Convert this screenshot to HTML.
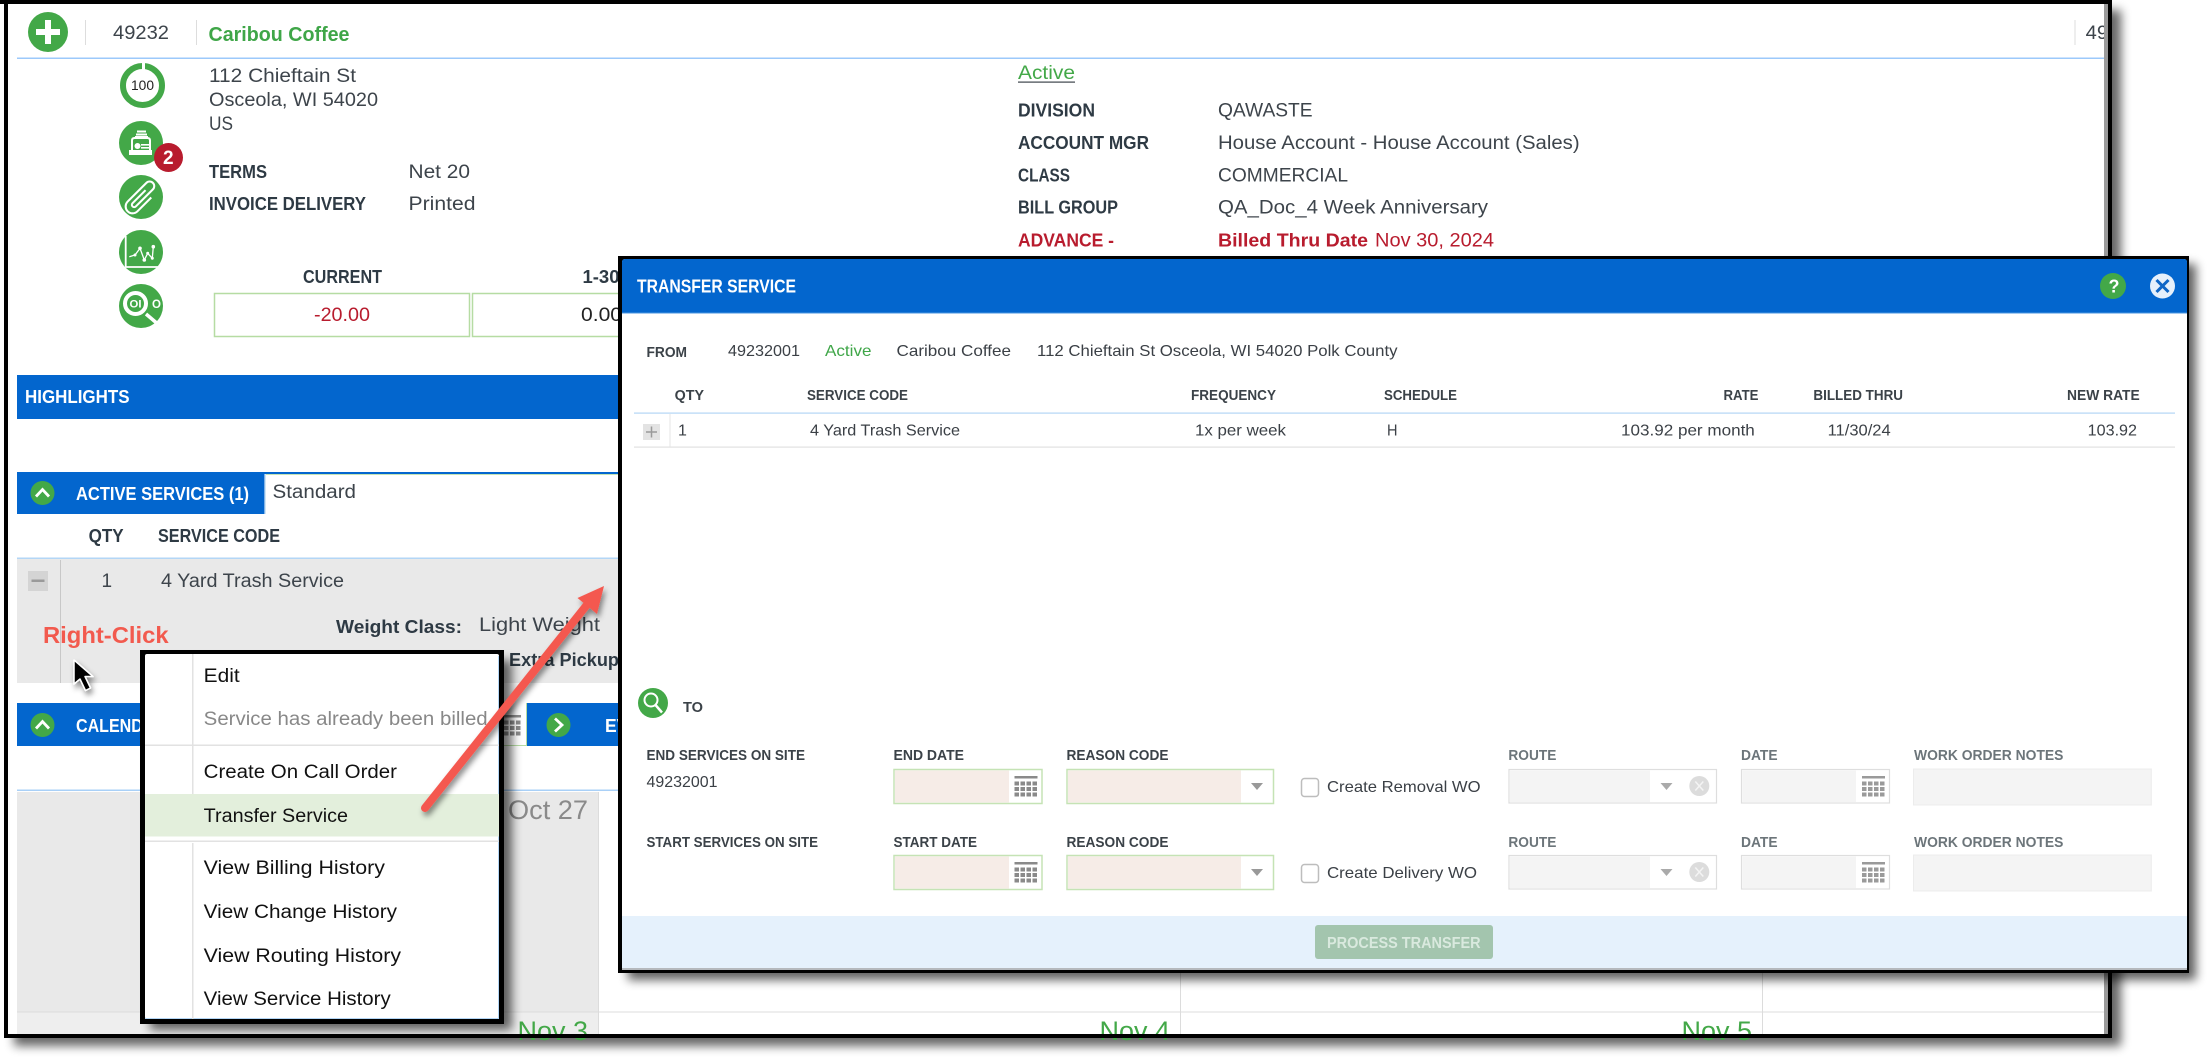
<!DOCTYPE html>
<html lang="en">
<head>
<meta charset="utf-8">
<title>Transfer Service</title>
<style>
html,body{margin:0;padding:0;background:#fff;width:2212px;height:1058px;overflow:hidden}
svg{display:block}
text{font-family:"Liberation Sans",Arial,sans-serif;white-space:pre}
.b{font-weight:700}
.m{font-size:19px;fill:#3d444b}
.l{font-size:18.5px;fill:#2e3a44;font-weight:700}
.d{font-size:16px;fill:#3b4046}
.h{font-size:14.5px;fill:#3b4248;font-weight:700}
.g{font-size:14.5px;fill:#6c757a;font-weight:700}
.w{font-size:18px;fill:#fff;font-weight:700}
.u{font-size:19px;fill:#111}
.t{font-size:27px}
</style>
</head>
<body>
<svg xmlns="http://www.w3.org/2000/svg" width="2212" height="1058" viewBox="0 0 2212 1058">
<defs>
<filter id="blur" filterUnits="userSpaceOnUse" x="0" y="0" width="2212" height="1058"><feGaussianBlur stdDeviation="5"/></filter>
<filter id="sh" filterUnits="userSpaceOnUse" x="0" y="0" width="2212" height="1058"><feDropShadow dx="2" dy="4" stdDeviation="3" flood-color="#000" flood-opacity=".45"/></filter>
<clipPath id="pg"><rect x="8" y="4" width="2096" height="1030"/></clipPath>
<g id="cal">
<rect x="0" y="0" width="23" height="2.5"/>
<rect x="0" y="5.5" width="4.5" height="4"/><rect x="6" y="5.5" width="4.5" height="4"/><rect x="12" y="5.5" width="4.5" height="4"/><rect x="18" y="5.5" width="4.5" height="4"/>
<rect x="0" y="11" width="4.5" height="4"/><rect x="6" y="11" width="4.5" height="4"/><rect x="12" y="11" width="4.5" height="4"/><rect x="18" y="11" width="4.5" height="4"/>
<rect x="0" y="16.5" width="4.5" height="4"/><rect x="6" y="16.5" width="4.5" height="4"/><rect x="12" y="16.5" width="4.5" height="4"/><rect x="18" y="16.5" width="4.5" height="4"/>
</g>
</defs>

<!-- page shadow -->
<rect x="14" y="10" width="2107" height="1036" fill="#000" opacity=".6" filter="url(#blur)"/>
<rect x="0" y="0" width="2112" height="1038" fill="#fff"/>

<!-- top bar -->
<circle cx="48" cy="32" r="20" fill="#43a848"/>
<rect x="36" y="29" width="24" height="6" fill="#fff"/><rect x="45" y="20" width="6" height="24" fill="#fff"/>
<rect x="85" y="20" width="1" height="25" fill="#ddd"/>
<text x="113" y="39" class="m" textLength="56" lengthAdjust="spacingAndGlyphs">49232</text>
<rect x="196" y="20" width="1" height="25" fill="#ddd"/>
<text x="208.500" y="41" class="b" font-size="20" fill="#3fa648" textLength="141" lengthAdjust="spacingAndGlyphs">Caribou Coffee</text>
<rect x="2074.500" y="20" width="1" height="25" fill="#ddd"/>
<text x="2085.700" y="39" class="m" textLength="56" lengthAdjust="spacingAndGlyphs" clip-path="url(#pg)">49232</text>
<rect x="17" y="57.500" width="2087" height="1.500" fill="#9cc9fb"/>

<!-- side icons -->
<circle cx="142.500" cy="85.500" r="19.500" fill="#fff" stroke="#43a848" stroke-width="6"/>
<rect x="142" y="62" width="3" height="8" fill="#fff"/>
<text x="131" y="90" font-size="13.500" fill="#222" textLength="23" lengthAdjust="spacingAndGlyphs">100</text>

<circle cx="141" cy="143" r="22" fill="#43a848"/>
<rect x="129" y="150" width="23" height="5" fill="#fff"/>
<path d="M132 150v-9.500q0-2.500 2.500-2.500h13q2.500 0 2.500 2.500v9.500" fill="none" stroke="#fff" stroke-width="2"/>
<circle cx="137.500" cy="146" r="3" fill="#fff"/>
<rect x="141" y="144" width="8" height="1.600" fill="#fff"/><rect x="141" y="147" width="8" height="1.600" fill="#fff"/>
<rect x="137" y="130.500" width="9" height="2" fill="#fff"/><rect x="136" y="133.500" width="11" height="2" fill="#fff"/><rect x="135" y="136" width="13" height="1.500" fill="#fff"/>

<circle cx="168.500" cy="157.500" r="14.500" fill="#b81c2e"/>
<text x="163" y="164" class="b" font-size="19" fill="#fff">2</text>

<circle cx="141" cy="197" r="22" fill="#43a848"/>
<g transform="translate(141.500 197.500) rotate(45) scale(1.150)">
<path d="M6 -6V11a6 6 0 0 1-12 0V-12a4 4 0 0 1 8 0V9a2 2 0 0 1-4 0V-7" fill="none" stroke="#fff" stroke-width="1.800"/>
</g>

<circle cx="141" cy="252" r="22" fill="#43a848"/>
<path d="M125.700 236V267H158" fill="none" stroke="#fff" stroke-width="1.800"/>
<path d="M129.300 256.700L135 255L140 248.300L144.300 260L147.700 253.300L152.300 258.300L153.300 246.700" fill="none" stroke="#fff" stroke-width="1.300"/>
<g fill="#fff"><circle cx="135" cy="255" r="1.500"/><circle cx="140" cy="248.300" r="1.800"/><circle cx="144.300" cy="260" r="1.800"/><circle cx="147.700" cy="253.300" r="1.500"/><circle cx="152.300" cy="258.300" r="1.500"/><circle cx="153.300" cy="246.700" r="1.800"/></g>

<circle cx="141" cy="306" r="22" fill="#43a848"/>
<circle cx="135.500" cy="303.500" r="10.500" fill="#43a848" stroke="#fff" stroke-width="4"/>
<text x="129.500" y="307.500" class="b" font-size="11" fill="#fff" textLength="12" lengthAdjust="spacingAndGlyphs">OI</text>
<text x="152" y="308" class="b" font-size="11.500" fill="#fff">O</text>
<path d="M146 314L159 325" stroke="#fff" stroke-width="3.500"/>

<!-- address -->
<text x="209" y="82" class="m" textLength="147" lengthAdjust="spacingAndGlyphs">112 Chieftain St</text>
<text x="209" y="106" class="m" textLength="169" lengthAdjust="spacingAndGlyphs">Osceola, WI 54020</text>
<text x="209" y="130" class="m" font-size="19" textLength="24" lengthAdjust="spacingAndGlyphs">US</text>
<text x="209" y="178" class="l" textLength="58" lengthAdjust="spacingAndGlyphs">TERMS</text>
<text x="408.500" y="178" class="m" textLength="61.500" lengthAdjust="spacingAndGlyphs">Net 20</text>
<text x="209" y="210" class="l" textLength="157" lengthAdjust="spacingAndGlyphs">INVOICE DELIVERY</text>
<text x="408.500" y="210" class="m" textLength="67" lengthAdjust="spacingAndGlyphs">Printed</text>

<text x="303" y="283" class="l" font-size="18" textLength="79" lengthAdjust="spacingAndGlyphs">CURRENT</text>
<text x="582.500" y="283" class="l" textLength="37" lengthAdjust="spacingAndGlyphs">1-30</text>
<rect x="214.500" y="293.500" width="255" height="43" fill="#fff" stroke="#b6dca3" stroke-width="1.500"/>
<rect x="472.500" y="293.500" width="255" height="43" fill="#fff" stroke="#b6dca3" stroke-width="1.500"/>
<text x="314" y="321" font-size="19" fill="#b81c2e" textLength="56" lengthAdjust="spacingAndGlyphs">-20.00</text>
<text x="581" y="321" font-size="19" fill="#222" textLength="41" lengthAdjust="spacingAndGlyphs">0.00</text>

<!-- account info -->
<text x="1018" y="79" font-size="19" fill="#43a848" textLength="57" lengthAdjust="spacingAndGlyphs">Active</text>
<rect x="1018" y="81.500" width="57" height="1.200" fill="#3d444b"/>
<text x="1018" y="116.700" class="l" textLength="77" lengthAdjust="spacingAndGlyphs">DIVISION</text>
<text x="1218" y="116.700" class="m" textLength="94.600" lengthAdjust="spacingAndGlyphs">QAWASTE</text>
<text x="1018" y="149" class="l" textLength="131" lengthAdjust="spacingAndGlyphs">ACCOUNT MGR</text>
<text x="1218" y="149" class="m" textLength="361.600" lengthAdjust="spacingAndGlyphs">House Account - House Account (Sales)</text>
<text x="1018" y="181.700" class="l" textLength="52" lengthAdjust="spacingAndGlyphs">CLASS</text>
<text x="1218" y="181.700" class="m" textLength="130" lengthAdjust="spacingAndGlyphs">COMMERCIAL</text>
<text x="1018" y="213.700" class="l" textLength="100" lengthAdjust="spacingAndGlyphs">BILL GROUP</text>
<text x="1218" y="213.700" class="m" textLength="270" lengthAdjust="spacingAndGlyphs">QA_Doc_4 Week Anniversary</text>
<text x="1018" y="246.700" class="b" font-size="18.500" fill="#b81c2e" textLength="96" lengthAdjust="spacingAndGlyphs">ADVANCE -</text>
<text x="1218" y="246.700" class="b" font-size="18.500" fill="#b81c2e" textLength="150" lengthAdjust="spacingAndGlyphs">Billed Thru Date</text>
<text x="1375" y="246.700" font-size="19" fill="#b81c2e" textLength="119" lengthAdjust="spacingAndGlyphs">Nov 30, 2024</text>

<!-- highlights -->
<rect x="17" y="375" width="601" height="44" fill="#0366ce"/>
<text x="25" y="403" class="w" textLength="104.500" lengthAdjust="spacingAndGlyphs">HIGHLIGHTS</text>

<!-- active services -->
<rect x="17" y="472" width="601" height="2" fill="#0366ce"/>
<rect x="265" y="474" width="353" height="1" fill="#c5e3b5"/>
<rect x="17" y="472" width="247.500" height="42" fill="#0366ce"/>
<rect x="265" y="474" width="1" height="40" fill="#cfe6f5"/>
<circle cx="42.500" cy="493" r="12" fill="#43a848"/>
<path d="M36 496.500L42.500 489.500L49 496.500" fill="none" stroke="#fff" stroke-width="2.800"/>
<text x="76" y="500" class="w" textLength="173" lengthAdjust="spacingAndGlyphs">ACTIVE SERVICES (1)</text>
<text x="272.500" y="498" class="m" textLength="83.500" lengthAdjust="spacingAndGlyphs">Standard</text>
<text x="88.600" y="542" class="l" font-size="18" textLength="35" lengthAdjust="spacingAndGlyphs">QTY</text>
<text x="158" y="542" class="l" font-size="18" textLength="122" lengthAdjust="spacingAndGlyphs">SERVICE CODE</text>
<rect x="17" y="558" width="601" height="125" fill="#e9e9e9"/>
<rect x="17" y="557.500" width="601" height="1.500" fill="#b3d6f6"/>
<rect x="60" y="560" width="1" height="123" fill="#c8c8c8"/>
<rect x="28" y="571" width="20" height="20" fill="#d4d4d4"/>
<rect x="31.500" y="579.500" width="13" height="2.500" fill="#9a9a9a"/>
<text x="101.500" y="587" class="m">1</text>
<text x="161" y="587" class="m" textLength="183" lengthAdjust="spacingAndGlyphs">4 Yard Trash Service</text>
<text x="336" y="633" class="l" textLength="126" lengthAdjust="spacingAndGlyphs">Weight Class:</text>
<text x="479" y="631" class="m" textLength="121" lengthAdjust="spacingAndGlyphs">Light Weight</text>
<text x="509" y="666" class="l" textLength="110" lengthAdjust="spacingAndGlyphs">Extra Pickup</text>
<text x="43" y="643" class="b" font-size="23.500" fill="#f25a4e" textLength="125.600" lengthAdjust="spacingAndGlyphs">Right-Click</text>

<!-- calendar bar -->
<rect x="17" y="703" width="601" height="43" fill="#0366ce"/>
<rect x="300" y="703" width="227" height="43" fill="#fff"/>
<rect x="300" y="745" width="227" height="1" fill="#b6dca3"/>
<rect x="526" y="703" width="1" height="43" fill="#b6dca3"/>
<circle cx="42.500" cy="725" r="12" fill="#43a848"/>
<path d="M36 728.500L42.500 721.500L49 728.500" fill="none" stroke="#fff" stroke-width="2.800"/>
<text x="76" y="732" class="w" textLength="90" lengthAdjust="spacingAndGlyphs">CALENDAR</text>
<use href="#cal" x="498" y="715" fill="#8c8c8c"/>
<circle cx="558.500" cy="725" r="12" fill="#43a848"/>
<path d="M555 718.500L562 725L555 731.500" fill="none" stroke="#fff" stroke-width="2.800"/>
<text x="605" y="732" class="w" textLength="70" lengthAdjust="spacingAndGlyphs">EVENTS</text>

<!-- calendar grid -->
<rect x="17" y="789.500" width="2087" height="1.500" fill="#a9d0f7"/>
<rect x="17" y="792" width="581" height="220" fill="#e9e9e9"/>
<rect x="17" y="1012.500" width="581" height="21.500" fill="#eeeeee"/>
<rect x="17" y="1011.500" width="2087" height="1" fill="#dcdcdc"/>
<rect x="598" y="792" width="1" height="242" fill="#dcdcdc"/>
<rect x="1180" y="792" width="1" height="242" fill="#dcdcdc"/>
<rect x="1762" y="792" width="1" height="242" fill="#dcdcdc"/>
<text x="508" y="819" class="t" fill="#8a8a8a" font-size="28" textLength="80" lengthAdjust="spacingAndGlyphs">Oct 27</text>
<text x="517.500" y="1040" class="t" fill="#43a848" textLength="70.500" lengthAdjust="spacingAndGlyphs">Nov 3</text>
<text x="1099.500" y="1040" class="t" fill="#43a848" textLength="70.500" lengthAdjust="spacingAndGlyphs">Nov 4</text>
<text x="1681.500" y="1040" class="t" fill="#43a848" textLength="70.500" lengthAdjust="spacingAndGlyphs">Nov 5</text>

<!-- page frame -->
<rect x="2104" y="4" width="4.500" height="1030" fill="#9a9a9a"/>
<rect x="2108" y="0" width="4" height="1038" fill="#000"/>
<rect x="0" y="0" width="2112" height="4" fill="#000"/>
<rect x="4" y="0" width="4" height="1038" fill="#000"/>
<rect x="4" y="1034" width="2108" height="4" fill="#000"/>

<!-- context menu -->
<rect x="150" y="660" width="362" height="370" fill="#000" opacity=".6" filter="url(#blur)"/>
<rect x="140" y="650" width="364" height="374" fill="#000"/>
<rect x="145" y="654" width="354" height="365" rx="2" fill="#fff"/>
<rect x="498" y="656" width="1" height="362" fill="#b3d6f6"/>
<rect x="145" y="1018" width="354" height="1" fill="#b3d6f6"/>
<rect x="192" y="654" width="1.500" height="140" fill="#e2e2e2"/>
<rect x="192" y="843" width="1.500" height="176" fill="#e2e2e2"/>
<rect x="145" y="744.500" width="354" height="1.500" fill="#e2e2e2"/>
<rect x="145" y="794" width="354" height="42.500" fill="#e3efdc"/>
<rect x="145" y="840.500" width="354" height="1.500" fill="#e2e2e2"/>
<text x="203.700" y="682" class="u" textLength="36" lengthAdjust="spacingAndGlyphs">Edit</text>
<text x="203.700" y="725" font-size="19" fill="#888" textLength="284" lengthAdjust="spacingAndGlyphs">Service has already been billed</text>
<text x="203.700" y="778" class="u" textLength="193.300" lengthAdjust="spacingAndGlyphs">Create On Call Order</text>
<text x="203.700" y="822" class="u" textLength="144.300" lengthAdjust="spacingAndGlyphs">Transfer Service</text>
<text x="203.700" y="874" class="u" textLength="181.300" lengthAdjust="spacingAndGlyphs">View Billing History</text>
<text x="203.700" y="918" class="u" textLength="193.300" lengthAdjust="spacingAndGlyphs">View Change History</text>
<text x="203.700" y="962" class="u" textLength="197.300" lengthAdjust="spacingAndGlyphs">View Routing History</text>
<text x="203.700" y="1005" class="u" textLength="187" lengthAdjust="spacingAndGlyphs">View Service History</text>

<!-- dialog -->
<rect x="628" y="264" width="1568" height="716" fill="#000" opacity=".62" filter="url(#blur)"/>
<rect x="618" y="256" width="1571" height="717" fill="#000"/>
<rect x="622" y="259" width="1565" height="711" rx="3" fill="#fff"/>
<path d="M622 313V262q0-3 3-3H2184q3 0 3 3V313Z" fill="#0366ce"/>
<rect x="622" y="312.500" width="1565" height="1" fill="#4a95e0"/>
<text x="637" y="292.700" class="w" font-size="17.500" textLength="159" lengthAdjust="spacingAndGlyphs">TRANSFER SERVICE</text>
<circle cx="2113" cy="286" r="13" fill="#43a848"/>
<text x="2108.500" y="292.500" class="b" font-size="18" fill="#fff">?</text>
<circle cx="2162.500" cy="286" r="12.500" fill="#e6f0fb"/>
<path d="M2156.500 280L2168.500 292M2168.500 280L2156.500 292" stroke="#0f66c6" stroke-width="3"/>

<text x="646.500" y="357" class="h" textLength="40.500" lengthAdjust="spacingAndGlyphs">FROM</text>
<text x="728" y="356" class="d" textLength="72" lengthAdjust="spacingAndGlyphs">49232001</text>
<text x="825" y="356" font-size="16" fill="#3fa648" textLength="46.500" lengthAdjust="spacingAndGlyphs">Active</text>
<text x="896.500" y="356" class="d" textLength="114.500" lengthAdjust="spacingAndGlyphs">Caribou Coffee</text>
<text x="1037" y="356" class="d" textLength="360.500" lengthAdjust="spacingAndGlyphs">112 Chieftain St Osceola, WI 54020 Polk County</text>

<text x="674.600" y="400" class="h" textLength="29.400" lengthAdjust="spacingAndGlyphs">QTY</text>
<text x="807" y="400" class="h" textLength="101" lengthAdjust="spacingAndGlyphs">SERVICE CODE</text>
<text x="1191" y="400" class="h" textLength="85" lengthAdjust="spacingAndGlyphs">FREQUENCY</text>
<text x="1384" y="400" class="h" textLength="73" lengthAdjust="spacingAndGlyphs">SCHEDULE</text>
<text x="1723.500" y="400" class="h" textLength="35" lengthAdjust="spacingAndGlyphs">RATE</text>
<text x="1813.400" y="400" class="h" textLength="89.600" lengthAdjust="spacingAndGlyphs">BILLED THRU</text>
<text x="2067" y="400" class="h" textLength="72.700" lengthAdjust="spacingAndGlyphs">NEW RATE</text>
<rect x="634" y="412.500" width="1541" height="1.200" fill="#b3d6f6"/>
<rect x="634" y="446.500" width="1541" height="1.200" fill="#e0e0e0"/>
<rect x="669.500" y="414" width="1" height="33" fill="#e4e4e4"/>
<rect x="643" y="424" width="17" height="16" fill="#e3e3e3"/>
<path d="M646 432H657M651.500 426.500V437.500" stroke="#9a9a9a" stroke-width="1.500"/>
<text x="678" y="435.500" class="d">1</text>
<text x="810" y="435.500" class="d" textLength="150" lengthAdjust="spacingAndGlyphs">4 Yard Trash Service</text>
<text x="1195" y="435.500" class="d" textLength="91" lengthAdjust="spacingAndGlyphs">1x per week</text>
<text x="1387" y="435.500" class="d" textLength="10.500" lengthAdjust="spacingAndGlyphs">H</text>
<text x="1621" y="435.500" class="d" textLength="133.800" lengthAdjust="spacingAndGlyphs">103.92 per month</text>
<text x="1827.600" y="435.500" class="d" textLength="63.100" lengthAdjust="spacingAndGlyphs">11/30/24</text>
<text x="2087.700" y="435.500" class="d" textLength="49.300" lengthAdjust="spacingAndGlyphs">103.92</text>

<circle cx="653" cy="703" r="15" fill="#43a848"/>
<circle cx="651" cy="700" r="6.500" fill="none" stroke="#fff" stroke-width="2"/>
<path d="M655.500 705L662 712.500" stroke="#fff" stroke-width="2.500"/>
<text x="683" y="712" class="h" textLength="20" lengthAdjust="spacingAndGlyphs">TO</text>

<!-- row 1 -->
<text x="646.500" y="760" class="h" textLength="158.500" lengthAdjust="spacingAndGlyphs">END SERVICES ON SITE</text>
<text x="646.500" y="787" class="d" textLength="71" lengthAdjust="spacingAndGlyphs">49232001</text>
<text x="893.500" y="760" class="h" textLength="70.500" lengthAdjust="spacingAndGlyphs">END DATE</text>
<text x="1066.500" y="760" class="h" textLength="102" lengthAdjust="spacingAndGlyphs">REASON CODE</text>
<rect x="894" y="769.500" width="148" height="34" fill="#fff" stroke="#c5e3b5" stroke-width="1.500"/>
<rect x="895" y="770.500" width="114" height="32" fill="#f6ece7"/>
<use href="#cal" x="1014.500" y="776" fill="#8a8a8a"/>
<rect x="1067" y="769.500" width="206.500" height="34" fill="#fff" stroke="#c5e3b5" stroke-width="1.500"/>
<rect x="1068" y="770.500" width="173" height="32" fill="#f6ece7"/>
<path d="M1251 783H1263L1257 790Z" fill="#999"/>
<rect x="1301.500" y="778.500" width="17" height="18" rx="3" fill="#fff" stroke="#bdbdbd" stroke-width="1.500"/>
<text x="1327" y="792" class="d" textLength="153.600" lengthAdjust="spacingAndGlyphs">Create Removal WO</text>
<text x="1508.400" y="760" class="g" textLength="48" lengthAdjust="spacingAndGlyphs">ROUTE</text>
<text x="1741" y="760" class="g" textLength="36.600" lengthAdjust="spacingAndGlyphs">DATE</text>
<text x="1914" y="760" class="g" textLength="149.400" lengthAdjust="spacingAndGlyphs">WORK ORDER NOTES</text>
<rect x="1509" y="769.500" width="207.500" height="33.500" fill="#fff" stroke="#dedede" stroke-width="1.200"/>
<rect x="1510" y="770.500" width="140" height="31.500" fill="#f4f4f4"/>
<path d="M1660.500 783H1672.500L1666.500 790Z" fill="#aaa"/>
<circle cx="1699.300" cy="786" r="10" fill="#dcdcdc"/>
<path d="M1695.300 781.500L1703.300 790.500M1703.300 781.500L1695.300 790.500" stroke="#f4f4f4" stroke-width="1.500"/>
<rect x="1741.500" y="769.500" width="148" height="33.500" fill="#fff" stroke="#dedede" stroke-width="1.200"/>
<rect x="1742.500" y="770.500" width="113.500" height="31.500" fill="#f4f4f4"/>
<use href="#cal" x="1862" y="776" fill="#9a9a9a"/>
<rect x="1913.500" y="769" width="237.800" height="36" fill="#f4f4f4" stroke="#ececec" stroke-width="1"/>

<!-- row 2 -->
<text x="646.500" y="847" class="h" textLength="171.500" lengthAdjust="spacingAndGlyphs">START SERVICES ON SITE</text>
<text x="893.500" y="847" class="h" textLength="83.500" lengthAdjust="spacingAndGlyphs">START DATE</text>
<text x="1066.500" y="847" class="h" textLength="102" lengthAdjust="spacingAndGlyphs">REASON CODE</text>
<rect x="894" y="855.500" width="148" height="34" fill="#fff" stroke="#c5e3b5" stroke-width="1.500"/>
<rect x="895" y="856.500" width="114" height="32" fill="#f6ece7"/>
<use href="#cal" x="1014.500" y="862" fill="#8a8a8a"/>
<rect x="1067" y="855.500" width="206.500" height="34" fill="#fff" stroke="#c5e3b5" stroke-width="1.500"/>
<rect x="1068" y="856.500" width="173" height="32" fill="#f6ece7"/>
<path d="M1251 869H1263L1257 876Z" fill="#999"/>
<rect x="1301.500" y="864.500" width="17" height="18" rx="3" fill="#fff" stroke="#bdbdbd" stroke-width="1.500"/>
<text x="1327" y="878" class="d" textLength="150" lengthAdjust="spacingAndGlyphs">Create Delivery WO</text>
<text x="1508.400" y="847" class="g" textLength="48" lengthAdjust="spacingAndGlyphs">ROUTE</text>
<text x="1741" y="847" class="g" textLength="36.600" lengthAdjust="spacingAndGlyphs">DATE</text>
<text x="1914" y="847" class="g" textLength="149.400" lengthAdjust="spacingAndGlyphs">WORK ORDER NOTES</text>
<rect x="1509" y="855.500" width="207.500" height="33.500" fill="#fff" stroke="#dedede" stroke-width="1.200"/>
<rect x="1510" y="856.500" width="140" height="31.500" fill="#f4f4f4"/>
<path d="M1660.500 869H1672.500L1666.500 876Z" fill="#aaa"/>
<circle cx="1699.300" cy="872" r="10" fill="#dcdcdc"/>
<path d="M1695.300 867.500L1703.300 876.500M1703.300 867.500L1695.300 876.500" stroke="#f4f4f4" stroke-width="1.500"/>
<rect x="1741.500" y="855.500" width="148" height="33.500" fill="#fff" stroke="#dedede" stroke-width="1.200"/>
<rect x="1742.500" y="856.500" width="113.500" height="31.500" fill="#f4f4f4"/>
<use href="#cal" x="1862" y="862" fill="#9a9a9a"/>
<rect x="1913.500" y="855" width="237.800" height="36" fill="#f4f4f4" stroke="#ececec" stroke-width="1"/>

<!-- dialog footer -->
<rect x="622" y="916" width="1565" height="52" fill="#e5f1fc"/>
<rect x="622" y="968" width="1565" height="2" fill="#b5b9bd"/>
<rect x="1315" y="925" width="178" height="34" rx="3" fill="#a3c5ae"/>
<text x="1327" y="948" class="b" font-size="15.500" fill="#d9e9de" textLength="153.600" lengthAdjust="spacingAndGlyphs">PROCESS TRANSFER</text>

<!-- annotation arrow -->
<g filter="url(#sh)">
<path d="M425 808L590 601" stroke="#f4594f" stroke-width="8" stroke-linecap="round" fill="none"/>
<path d="M604 586L577.500 598L597 614Z" fill="#f4594f"/>
</g>

<!-- cursor -->
<path d="M74 660V684L80 679L85.500 690.500L90.500 688L85 676.500H93Z" fill="#000" stroke="#fff" stroke-width="1.500" stroke-linejoin="round" filter="url(#sh)"/>
</svg>
</body>
</html>
